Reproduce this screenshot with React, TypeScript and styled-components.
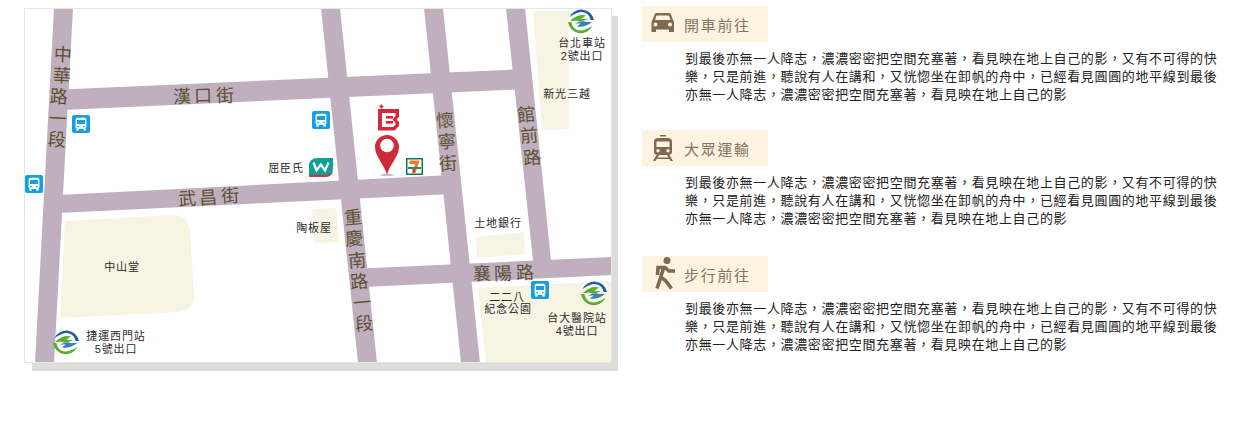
import { ReactNode } from 'react';
import styled, { createGlobalStyle } from 'styled-components';

const GlobalStyle = createGlobalStyle`
  html, body {
    margin: 0;
    background: #fff;
    font-family: "Noto Sans CJK TC", "Liberation Sans", sans-serif;
  }
`;

const Page = styled.div`
  display: flex;
  align-items: flex-start;
  width: 1240px;
  height: 424px;
  padding: 6px 0 0 24px;
  box-sizing: border-box;
`;

const MapFrame = styled.div`
  position: relative;
  flex: none;
  width: 588px;
  height: 355px;
  margin-top: 2px;
  background: #fff;

  &::before {
    content: '';
    position: absolute;
    left: 8px;
    top: 8px;
    width: 586px;
    height: 355px;
    background: #dddddb;
    z-index: 0;
  }

  &::after {
    content: '';
    position: absolute;
    inset: 0;
    border: 1px solid #e8e5da;
    pointer-events: none;
  }
`;

const MapCanvas = styled.svg`
  position: relative;
  display: block;
  width: 588px;
  height: 355px;
  background: #fff;
`;

const Road = styled.polygon`
  fill: #c0b0bf;
`;

const Park = styled.path`
  fill: #f7f4e4;
`;

const RoadChar = styled.text`
  font-size: 18px;
  fill: #5c5233;
  text-anchor: middle;
  dominant-baseline: central;
`;

const PlaceLabel = styled.text`
  font-family: "Liberation Sans", "Noto Sans CJK TC", sans-serif;
  font-size: 11px;
  letter-spacing: 0.9px;
  fill: #2b2b2b;
  text-anchor: middle;
  dominant-baseline: central;
`;

const Directions = styled.div`
  margin-left: 30px;
  width: 560px;
`;

const Section = styled.section<{ $gap: number }>`
  margin-bottom: ${(p) => p.$gap}px;
`;

const Heading = styled.h3`
  display: flex;
  align-items: center;
  width: 126px;
  height: 36px;
  margin: 0 0 7px;
  padding-left: 3px;
  box-sizing: border-box;
  background: #fdf3e1;
  color: #85755d;
  font-size: 15px;
  font-weight: 400;
  letter-spacing: 1.7px;
`;

const HeadingIcon = styled.svg`
  flex: none;
  width: 36px;
  height: 36px;
  margin-right: 3px;
  fill: #7d6a50;
`;

const Body = styled.p`
  width: 534px;
  margin: 0 0 0 43px;
  color: #222;
  font-size: 13px;
  letter-spacing: 0.05em;
  line-height: 18px;
`;

const COPY =
  '到最後亦無一人降志，濃濃密密把空間充塞著，看見映在地上自己的影，又有不可得的快樂，只是前進，聽說有人在講和，又恍惚坐在卸帆的舟中，已經看見圓圓的地平線到最後亦無一人降志，濃濃密密把空間充塞著，看見映在地上自己的影';

const roads = [
  '54,8 73,8 54,363 35,363',
  '321,8 340,8 377,363 358,363',
  '424,8 443,8 480,363 461,363',
  '506,8 525,8 552,270 534,270',
  '62,89.5 516,69.5 518,89.5 62,110',
  '58,195 450,175 452,194 58,213',
  '362,268.5 612,257 612,275 364,287',
];

const parks = [
  'M65 221 L173 215 Q189 215 190 232 L194 295 Q194 311 177 312 L60 318 Z',
  'M312 209 L336 208 L339 242 L315 243 Z',
  'M476 237 L524 232 L525 254 L477 258 Z',
  'M478 288 L611 281 L611 363 L486 363 Z',
  'M533 11 L569 11 L569 129 L542 130 Z',
];

// [text, x, y, rotation]
const roadChars: [string, number, number, number][] = [
  ['中', 63, 53, 3], ['華', 62, 74, 3], ['路', 59, 95, 3], ['一', 58, 117, 3], ['段', 57, 138, 3],
  ['漢', 182, 95, -2], ['口', 203, 94, -2], ['街', 225, 94, -2],
  ['武', 187, 197, -3], ['昌', 208, 196, -3], ['街', 230, 194, -3],
  ['懷', 445, 119, -4], ['寧', 447, 140, -4], ['街', 448, 162, -4],
  ['館', 526, 113, -5], ['前', 529, 134, -5], ['路', 532, 156, -5],
  ['重', 353, 216, -5], ['慶', 354, 237, -5], ['南', 357, 259, -5],
  ['路', 359, 280, -5], ['一', 362, 301, -5], ['段', 364, 322, -5],
  ['襄', 482, 272, -2], ['陽', 503, 272, -2], ['路', 525, 271, -2],
];

const places: [string, number, number][] = [
  ['屈臣氏', 286, 168],
  ['台北車站', 582, 43],
  ['2號出口', 582, 56],
  ['新光三越', 567, 94],
  ['陶板屋', 314, 228],
  ['中山堂', 122, 267],
  ['土地銀行', 498, 223],
  ['二二八', 507, 297],
  ['紀念公園', 508, 309],
  ['台大醫院站', 577, 318],
  ['4號出口', 577, 331],
  ['捷運西門站', 116, 336],
  ['5號出口', 116, 349],
];

const busStops: [number, number][] = [
  [72, 115],
  [312, 111],
  [25, 175],
  [531, 281],
];

const metroLogos: [number, number][] = [
  [581, 21],
  [66, 342],
  [594, 293],
];

function BusStop({ x, y }: { x: number; y: number }) {
  return (
    <g transform={`translate(${x} ${y})`}>
      <rect width="18" height="18" rx="2" fill="#12a0e2" />
      <rect x="3.6" y="2.8" width="10.8" height="11.2" rx="2" fill="#fff" />
      <rect x="5" y="5" width="8" height="4" fill="#12a0e2" />
      <rect x="4.2" y="14" width="2.4" height="1.6" fill="#fff" />
      <rect x="11.4" y="14" width="2.4" height="1.6" fill="#fff" />
      <circle cx="6" cy="11.6" r="0.9" fill="#12a0e2" />
      <circle cx="12" cy="11.6" r="0.9" fill="#12a0e2" />
    </g>
  );
}

function MetroLogo({ x, y }: { x: number; y: number }) {
  return (
    <g transform={`translate(${x} ${y})`}>
      <path d="M-11.5 -4 A13 13 0 0 1 13 -1 L9.5 -1 A9.2 9.2 0 0 0 -4 -8 Q-8 -6.5 -11.5 -4 Z" fill="#1a5fa8" />
      <path d="M11.5 5 A13 13 0 0 1 -13 1 L-9.5 1 A9.2 9.2 0 0 0 4 8.5 Q8 7 11.5 5 Z" fill="#58ad32" />
      <path d="M-11 0 Q-3 -7.5 5 -5.5 Q2 -3.5 0 -2 L7 -2 Q0 2 -5 -0.5 Q-8 0 -11 0 Z" fill="#58ad32" />
      <path d="M11 1 Q4 7 -4 5.5 Q-2 3.5 0 2.5 L-6 2.5 Q1 -1 5 1 Q8 1 11 1 Z" fill="#3f7fb8" />
    </g>
  );
}

function CityMap() {
  return (
    <MapCanvas viewBox="24 8 588 355">
      {parks.map((d) => (
        <Park key={d} d={d} />
      ))}
      {roads.map((points) => (
        <Road key={points} points={points} />
      ))}
      {roadChars.map(([c, x, y, r]) => (
        <RoadChar key={`${c}${x}`} x={x} y={y} transform={`rotate(${r} ${x} ${y})`}>
          {c}
        </RoadChar>
      ))}
      {places.map(([t, x, y]) => (
        <PlaceLabel key={t} x={x} y={y}>
          {t}
        </PlaceLabel>
      ))}
      {busStops.map(([x, y]) => (
        <BusStop key={x} x={x} y={y} />
      ))}
      {metroLogos.map(([x, y]) => (
        <MetroLogo key={x} x={x} y={y} />
      ))}

      {/* Watsons */}
      <path d="M309 173 V166 Q309 158 318 158 H333 V168 Q333 176 325 176 H309 Z" fill="#0f9f96" />
      <path d="M309 175 H326 Q331 175 333 171 Q332 177 325 177 H309 Z" fill="#d8303f" />
      <path d="M313.5 162.5 L316.5 170.5 L320.8 164.5 L325 170.5 L328.5 162.5" fill="none" stroke="#fff" strokeWidth="2.2" />

      {/* B logo */}
      <path
        fillRule="evenodd"
        d="M378 109 H399 V117 L396.5 119.5 L399 122 V126 L394.5 130.5 H378 Z M382 113 V127 H393 L395.5 124.5 V123 L392.5 119.5 L395.5 116 V113 Z"
        fill="#d6283d"
      />
      <rect x="386" y="116" width="7" height="2.6" fill="#d6283d" />
      <rect x="386" y="121" width="7" height="2.6" fill="#d6283d" />
      <rect x="380.6" y="104.5" width="1.6" height="4" fill="#d6283d" />
      <rect x="379.4" y="105.7" width="4" height="1.6" fill="#d6283d" />

      {/* Pin */}
      <ellipse cx="387" cy="175" rx="7" ry="1.2" fill="#c4bcc0" />
      <path d="M387 175 C385 166 375 156 375 147 A12 12 0 0 1 399 147 C399 156 389 166 387 175 Z" fill="#cf2a3a" />
      <circle cx="387" cy="145.5" r="6.8" fill="#fff" />

      {/* 7-Eleven */}
      <rect x="406" y="158" width="17" height="17" fill="#0c7a4e" />
      <rect x="407.5" y="159.5" width="14" height="14" fill="#fff" />
      <path d="M409.5 160.5 H419.5 L415.5 173 H412.5 L415 164 H409.5 Z" fill="#ee7a23" />
      <rect x="408" y="167" width="13" height="2" fill="#2c8a5c" />
      <path d="M412.5 169 H415 L414.5 173 H412.5 Z" fill="#d8303f" />
    </MapCanvas>
  );
}

const CarIcon = (
  <HeadingIcon viewBox="0 0 36 36">
    <path
      fillRule="evenodd"
      d="M11 7 H24 Q25.5 7 26 8.5 L28 14 Q29 15 29 16.5 V26 H24 V23.5 H11 V26 H6.5 V16.5 Q6.5 15 7.5 14 L9.5 8.5 Q10 7 11 7 Z M11.5 9.5 L10 14 H25.5 L24 9.5 Z M10.5 16.5 A2 2 0 1 0 10.5 20.5 A2 2 0 1 0 10.5 16.5 Z M25 16.5 A2 2 0 1 0 25 20.5 A2 2 0 1 0 25 16.5 Z"
    />
  </HeadingIcon>
);

const TrainIcon = (
  <HeadingIcon viewBox="0 0 36 36">
    <path d="M15 5 H21 V6.5 H15 Z" />
    <path
      fillRule="evenodd"
      d="M13 8 H23 Q27 8 27 12 V22 Q27 25 23 25 H13 Q9 25 9 22 V12 Q9 8 13 8 Z M11.5 11.5 V17 H24.5 V11.5 Z M13 19 A1.7 1.7 0 1 0 13 22.4 A1.7 1.7 0 1 0 13 19 Z M23 19 A1.7 1.7 0 1 0 23 22.4 A1.7 1.7 0 1 0 23 19 Z"
    />
    <path d="M11.5 25 H14 L10.5 31 H8 Z M22 25 H24.5 L28 31 H25.5 Z M12 27.5 H24 V29 H12 Z" />
  </HeadingIcon>
);

const WalkIcon = (
  <HeadingIcon viewBox="0 0 36 36">
    <circle cx="22" cy="4.5" r="3.5" />
    <path
      d="M12.5 19 L13 11.5 H20 L24 15 H30 M19 10.5 L15.5 22 L12 32.5 M15.5 21 L20.5 24.5 L26.5 32.5"
      fill="none"
      stroke="#7d6a50"
      strokeWidth="3.6"
    />
  </HeadingIcon>
);

function Direction({ icon, title, gap }: { icon: ReactNode; title: string; gap: number }) {
  return (
    <Section $gap={gap}>
      <Heading>
        {icon}
        {title}
      </Heading>
      <Body>{COPY}</Body>
    </Section>
  );
}

export default function App() {
  return (
    <>
      <GlobalStyle />
      <Page>
        <MapFrame>
          <CityMap />
        </MapFrame>
        <Directions>
          <Direction icon={CarIcon} title="開車前往" gap={27} />
          <Direction icon={TrainIcon} title="大眾運輸" gap={29} />
          <Direction icon={WalkIcon} title="步行前往" gap={0} />
        </Directions>
      </Page>
    </>
  );
}
